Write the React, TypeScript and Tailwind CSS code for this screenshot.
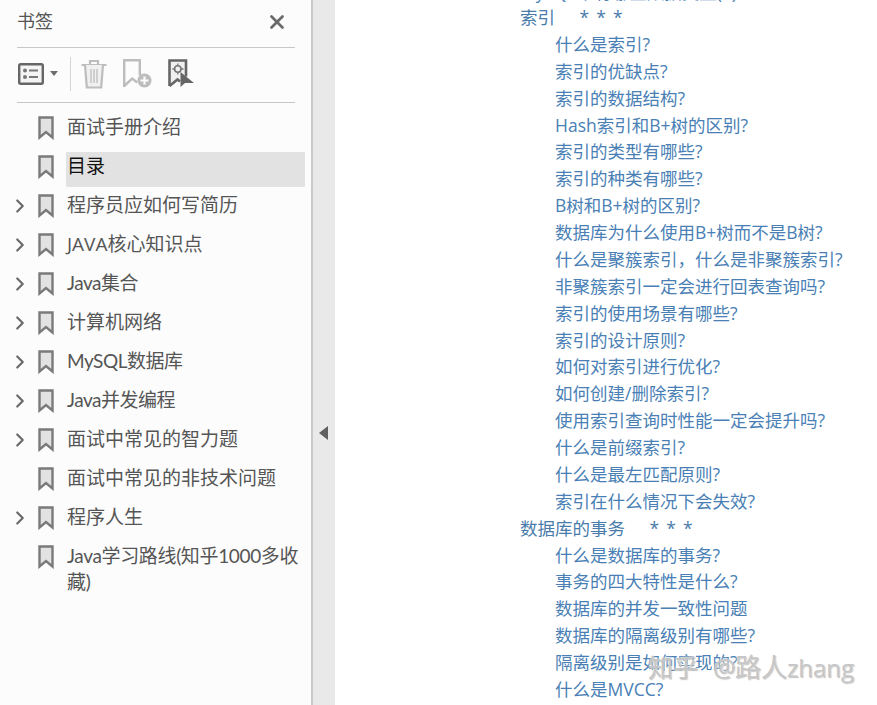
import React from 'react';
import { ChevronRight, X } from 'lucide-react';

const font = 'font-["Open_Sans","Noto_Sans_CJK_SC",sans-serif]';

const latoTight = 'w-[240px] font-["Lato","Noto_Sans_CJK_SC",sans-serif] tracking-[-0.5px]';

const bookmarks = [
  { label: '面试手册介绍' },
  { label: '目录', active: true },
  { label: '程序员应如何写简历', arrow: true },
  { label: 'JAVA核心知识点', arrow: true },
  { label: 'Java集合', arrow: true, cls: latoTight },
  { label: '计算机网络', arrow: true },
  { label: 'MySQL数据库', arrow: true, cls: latoTight },
  { label: 'Java并发编程', arrow: true, cls: latoTight },
  { label: '面试中常见的智力题', arrow: true },
  { label: '面试中常见的非技术问题' },
  { label: '程序人生', arrow: true },
  { label: 'Java学习路线(知乎1000多收藏)', cls: 'w-[240px] font-["Lato","Noto_Sans_CJK_SC",sans-serif] tracking-[-0.35px]' },
];

const toc = [
  { text: '索引　 * * *', top: true },
  { text: '什么是索引?' },
  { text: '索引的优缺点?' },
  { text: '索引的数据结构?' },
  { text: 'Hash索引和B+树的区别?' },
  { text: '索引的类型有哪些?' },
  { text: '索引的种类有哪些?' },
  { text: 'B树和B+树的区别?' },
  { text: '数据库为什么使用B+树而不是B树?' },
  { text: '什么是聚簇索引，什么是非聚簇索引?' },
  { text: '非聚簇索引一定会进行回表查询吗?' },
  { text: '索引的使用场景有哪些?' },
  { text: '索引的设计原则?' },
  { text: '如何对索引进行优化?' },
  { text: '如何创建/删除索引?' },
  { text: '使用索引查询时性能一定会提升吗?' },
  { text: '什么是前缀索引?' },
  { text: '什么是最左匹配原则?' },
  { text: '索引在什么情况下会失效?' },
  { text: '数据库的事务　 * * *', top: true },
  { text: '什么是数据库的事务?' },
  { text: '事务的四大特性是什么?' },
  { text: '数据库的并发一致性问题' },
  { text: '数据库的隔离级别有哪些?' },
  { text: '隔离级别是如何实现的?' },
  { text: '什么是MVCC?' },
];

const BookmarkIcon = () => (
  <svg width="16" height="24" viewBox="0 0 16 24" className="shrink-0">
    <path d="M1.5 1.500h13v20l-6.500-5.500-6.500 5.500z" fill="#e2e2e2" stroke="#7a7a7a" strokeWidth="2.400" />
  </svg>
);

const Toolbar = () => (
  <div className="flex h-[55px] items-center border-b border-[#c8c8c8] pb-[3px]">
    <svg width="26" height="22" viewBox="0 0 26 22" className="ml-[1px]">
      <rect x="1.200" y="1.200" width="23.600" height="19.600" rx="1.500" fill="#f4f4f4" stroke="#666666" strokeWidth="2.400" />
      <circle cx="7" cy="7.500" r="2" fill="#777777" />
      <circle cx="7" cy="14" r="2" fill="#777777" />
      <path d="M11 7.500h9M11 14h9" stroke="#777777" strokeWidth="2" />
    </svg>
    <svg width="8" height="5" viewBox="0 0 8 5" className="ml-[6px]">
      <path d="M0 0h8L4 5z" fill="#6e6e6e" />
    </svg>
    <div className="ml-[12px] h-[34px] w-px bg-[#d4d4d4]" />
    <svg width="26" height="30" viewBox="0 0 26 30" className="ml-[10px]">
      <path d="M0.500 6h25M9 5V2h8v3" fill="none" stroke="#bdbdbd" strokeWidth="2.200" />
      <path d="M4 6l1.800 22.500h14.400L22 6" fill="#f0f0f0" stroke="#bdbdbd" strokeWidth="2.200" />
      <path d="M10 10v14M13 10v14M16 10v14" stroke="#bdbdbd" strokeWidth="1.300" />
    </svg>
    <svg width="29" height="29" viewBox="0 0 29 29" className="ml-[16px]">
      <path d="M1.200 28V1.200h15.600v15" fill="none" stroke="#bdbdbd" strokeWidth="2.400" />
      <path d="M1.200 27l8-7.500 5 4" fill="none" stroke="#bdbdbd" strokeWidth="2.400" />
      <circle cx="21.500" cy="21.500" r="7" fill="#bdbdbd" />
      <path d="M21.500 17.500v8M17.500 21.500h8" stroke="#fcfcfc" strokeWidth="2.200" />
    </svg>
    <svg width="26" height="29" viewBox="0 0 26 29" className="ml-[16px]">
      <path d="M1.500 27V1.500h16.500v16" fill="#f0f0f0" stroke="#666666" strokeWidth="2.600" />
      <path d="M1.500 27l8-6.500 2.500 2" fill="none" stroke="#666666" strokeWidth="2.600" />
      <circle cx="9.800" cy="10" r="3.200" fill="none" stroke="#777777" strokeWidth="1.600" />
      <path d="M9.800 4.500V7M9.800 13v2.500M4.300 10h2.500M13 10h2.500" stroke="#777777" strokeWidth="1.300" />
      <path d="M12.500 13l0 15 4.500-4 9 0z" fill="#666666" />
    </svg>
  </div>
);

const Sidebar = () => (
  <aside className="flex w-[313px] shrink-0 flex-col border-r-2 border-[#c9c9c9] bg-[#fcfcfc]">
    <div className="ml-[17px] mr-[16px]">
      <div className="flex h-[48px] items-center justify-between border-b border-[#c8c8c8] pb-[4px]">
        <span className="text-[18px] text-[#555555]">书签</span>
        <X size={22} strokeWidth={3} className="mr-[7px] text-[#6a6a6a]" />
      </div>
      <Toolbar />
    </div>
    <ul className="mt-[5px]">
      {bookmarks.map((b) => (
        <li key={b.label} className="flex min-h-[39px] items-start">
          <span className="flex h-[39px] w-[38px] shrink-0 items-center justify-end pr-[7px]">
            {b.arrow && <ChevronRight size={22} strokeWidth={2.400} className="text-[#6a6a6a]" />}
          </span>
          <span className="flex h-[39px] w-[28px] shrink-0 items-center">
            <BookmarkIcon />
          </span>
          {b.active ? (
            <span className="mt-[5px] -mb-[1px] h-[35px] w-[239px] rounded-[1px] bg-[#e2e2e2] pl-[1px] text-[19px] leading-[29px] text-[#111111]">
              {b.label}
            </span>
          ) : (
            <span className={`ml-[1px] pt-[6px] text-[19px] leading-[26px] text-[#555555] ${b.cls ?? 'w-[236px]'}`}>
              {b.label}
            </span>
          )}
        </li>
      ))}
    </ul>
  </aside>
);

const Gutter = () => (
  <div className="flex w-[22px] shrink-0 items-center justify-center bg-[#e9e9e9] pt-[161px]">
    <svg width="9" height="14" viewBox="0 0 9 14" className="mr-[1px]">
      <path d="M9 0v14L0 7z" fill="#5f5f5f" />
    </svg>
  </div>
);

const Page = () => (
  <main className="relative flex-1 overflow-hidden bg-white">
    <div className="-mt-[18px] pl-[185px] text-[17.5px] leading-[26.88px] text-[#4a7fb5]">
      <div className="h-[22px] whitespace-nowrap leading-[20px]">MySQL中有哪些数据类型(*)</div>
      {toc.map((t) => (
        <div
          key={t.text}
          className={t.top ? 'whitespace-pre text-[#4a7cab] [word-spacing:2.500px]' : 'whitespace-nowrap pl-[35px]'}
        >
          {t.text}
        </div>
      ))}
    </div>
    <div className="absolute left-[313px] top-[651px] flex items-baseline whitespace-nowrap text-[25px] leading-[32px] text-[#c6c6c6] [text-shadow:0_0_3px_#ffffff,1px_1px_1px_rgba(120,120,120,0.6)]">
      <span className="w-[65px]">知乎</span>
      <span className="w-[22px]">@</span>
      <span className="w-[52px] text-[26px]">路人</span>
      <span className="text-[24px]">zhang</span>
    </div>
  </main>
);

export default function App() {
  return (
    <div className={`flex h-[705px] w-[877px] overflow-hidden ${font}`}>
      <Sidebar />
      <Gutter />
      <Page />
    </div>
  );
}
